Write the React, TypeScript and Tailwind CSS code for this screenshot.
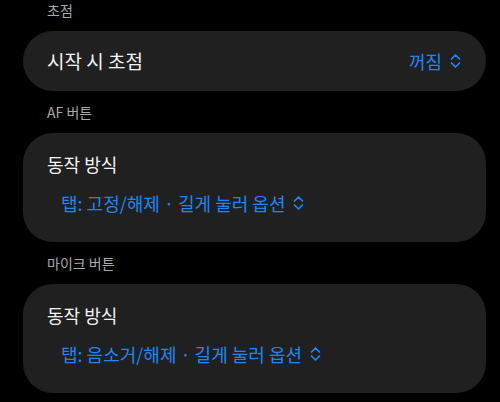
const font = { fontFamily: '"Noto Sans CJK KR", "Noto Sans", sans-serif' };

function UpDown() {
	return (
		<svg width="11" height="16" viewBox="0 0 11 16" fill="none" className="shrink-0">
			<path d="M1.5 6 L5.5 2 L9.5 6" stroke="#1e86f7" strokeWidth="1.7" strokeLinecap="round" strokeLinejoin="round" />
			<path d="M1.5 10 L5.5 14 L9.5 10" stroke="#1e86f7" strokeWidth="1.7" strokeLinecap="round" strokeLinejoin="round" />
		</svg>
	);
}

function Header({ label }: { label: string }) {
	return (
		<div className="flex h-[42px] items-center pl-6 text-[14px] text-[#a9a9a9]">{label}</div>
	);
}

function ModeCard({ value }: { value: string }) {
	return (
		<div className="flex h-[109px] flex-col rounded-[30px] bg-[#202020] pt-[19px] pl-6">
			<div className="h-6 text-[18px] leading-6 text-[#f2f2f2]">동작 방식</div>
			<div className="mt-[15px] flex items-center gap-2 pl-[14px]">
				<span className="text-[18px] leading-6 text-[#1e86f7]">{value}</span>
				<UpDown />
			</div>
		</div>
	);
}

export default function App() {
	return (
		<div className="h-[402px] w-[500px] overflow-hidden bg-black pr-[14px] pl-[23px]" style={font}>
			<div className="-mt-[11px]">
				<Header label="초점" />
				<div className="flex h-[60px] items-center justify-between rounded-[30px] bg-[#202020] pr-[25px] pl-6">
					<span className="text-[19px] text-[#f2f2f2]">시작 시 초점</span>
					<div className="flex items-center gap-2">
						<span className="text-[18px] text-[#1e86f7]">꺼짐</span>
						<UpDown />
					</div>
				</div>
				<Header label="AF 버튼" />
				<ModeCard value="탭: 고정/해제 · 길게 눌러 옵션" />
				<Header label="마이크 버튼" />
				<ModeCard value="탭: 음소거/해제 · 길게 눌러 옵션" />
			</div>
		</div>
	);
}
